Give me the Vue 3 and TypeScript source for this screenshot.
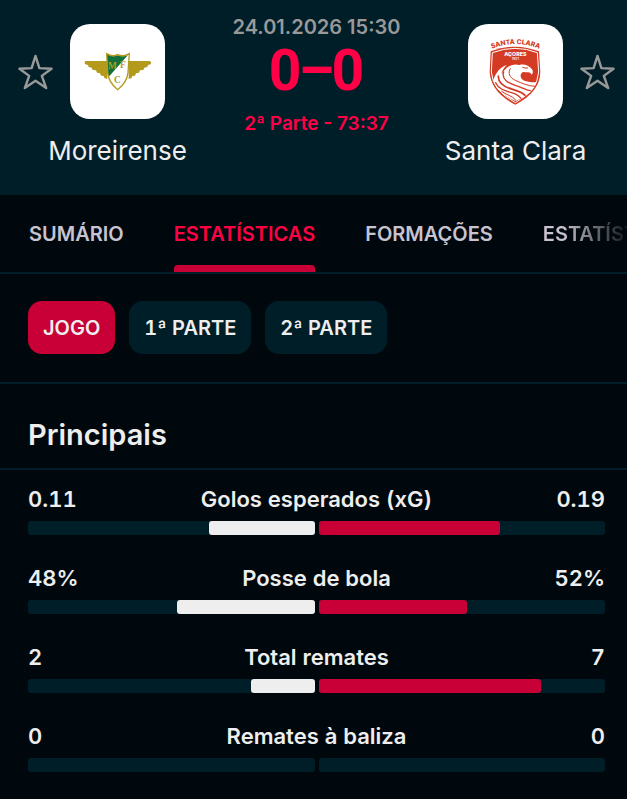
<script setup lang="ts">
import { ref } from 'vue'

interface Stat {
  label: string
  home: number
  away: number
  unit?: string
}

const tabs = ['Sumário', 'Estatísticas', 'Formações', 'Estatísticas']
const activeTab = ref(1)

const periods = ['Jogo', '1ª Parte', '2ª Parte']
const activePeriod = ref(0)

const stats: Stat[] = [
  { label: 'Golos esperados (xG)', home: 0.11, away: 0.19 },
  { label: 'Posse de bola', home: 48, away: 52, unit: '%' },
  { label: 'Total remates', home: 2, away: 7 },
  { label: 'Remates à baliza', home: 0, away: 0 },
]

function share(value: number, stat: Stat): string {
  const total = stat.home + stat.away
  return total ? `${(value / total) * 100}%` : '0'
}
</script>

<template>
  <main class="page">
    <header class="match">
      <div class="team home">
        <button class="star" type="button" aria-label="Favorito Moreirense">
          <svg viewBox="0 0 36 36"><path d="M18 1.500 22 14 34.500 14.600 24.500 22 29 34.500 18 27 7 34.500 11.500 22 1.500 14.600 14 14Z" /></svg>
        </button>
        <div class="crest">
          <svg viewBox="210 72 285 285">
            <path fill="#b39a1d" d="M257 183H322V237L313 234 311 228 303 227 300 220 291 218 288 211 278 210 275 203 266 201 264 195 256 193Q251 187 257 183Z" />
            <path fill="#b39a1d" d="M450 183H386V237L395 234 397 228 405 227 408 220 417 218 420 211 430 210 433 203 442 201 444 195 452 193Q456 187 450 183Z" />
            <path fill="#fff" d="M320 161Q337 172 353 164Q371 172 388 161L384 218Q381 248 353 269Q326 248 323 218Z" />
            <path fill="#12713b" d="M321 163Q337 172 353 166Q370 172 384 165L325 232 322 210Z" />
            <path fill="none" stroke="#b39a1d" stroke-width="4" d="M320 161Q337 172 353 164Q371 172 388 161L384 218Q381 248 353 269Q326 248 323 218Z" />
            <g class="monogram">
              <text x="324" y="207">M</text>
              <text x="360" y="203">F</text>
              <text x="342" y="250">C</text>
            </g>
          </svg>
        </div>
        <h2 class="name">Moreirense</h2>
      </div>

      <div class="result">
        <time class="date" datetime="2026-01-24T15:30">24.01.2026 15:30</time>
        <div class="score"><span>0</span><span class="dash">–</span><span>0</span></div>
        <div class="status">2ª Parte - 73:37</div>
      </div>

      <div class="team away">
        <div class="crest">
          <svg viewBox="-21 -18 285 285">
            <defs><path id="arch" d="M52 56Q121 28 192 56" /></defs>
            <text class="club"><textPath href="#arch" startOffset="50%">SANTA CLARA</textPath></text>
            <path fill="#d33b24" d="M47 64Q84 50 120 50Q157 50 192 64L196 126Q195 186 121 224Q47 186 44 126Z" />
            <path fill="none" stroke="#fff" stroke-width="3" d="M52 68Q86 55 120 55Q154 55 187 68L191 126Q188 181 121 218Q52 181 49 126Z" />
            <text class="place" x="121" y="78">AÇORES</text>
            <text class="year" x="121" y="90">1921</text>
            <path fill="#fff" d="M55 150C62 128 77 110 96 105C84 116 81 124 80 132C94 109 113 99 133 105C147 101 162 106 171 118C175 123 174 130 170 134C166 126 158 127 151 127C143 124 136 130 137 139C138 151 153 158 185 157C181 169 174 179 164 188C149 201 136 207 121 213C88 198 60 178 55 150Z" />
            <g fill="none" stroke="#d33b24" stroke-linecap="round">
              <path stroke-width="3" d="M106 116C98 128 103 143 121 151C141 160 159 168 179 169" />
              <path stroke-width="4" d="M86 126C78 148 102 160 121 166C139 172 153 180 166 182" />
              <path stroke-width="5" d="M70 138C69 162 91 172 113 178C130 183 143 188 150 196" />
              <path stroke-width="4" d="M62 158C72 181 98 184 119 191C128 195 134 199 138 205" />
              <path stroke-width="3" d="M80 184C93 195 111 196 122 210" />
              <path stroke-width="3" d="M143 112Q150 116 158 114" />
            </g>
          </svg>
        </div>
        <button class="star" type="button" aria-label="Favorito Santa Clara">
          <svg viewBox="0 0 36 36"><path d="M18 1.500 22 14 34.500 14.600 24.500 22 29 34.500 18 27 7 34.500 11.500 22 1.500 14.600 14 14Z" /></svg>
        </button>
        <h2 class="name">Santa Clara</h2>
      </div>
    </header>

    <nav class="tabs">
      <button
        v-for="(tab, i) in tabs"
        :key="i"
        type="button"
        class="tab"
        :class="{ active: i === activeTab }"
        @click="activeTab = i"
      >{{ tab }}</button>
    </nav>

    <div class="periods">
      <button
        v-for="(period, i) in periods"
        :key="period"
        type="button"
        class="period"
        :class="{ active: i === activePeriod }"
        @click="activePeriod = i"
      >{{ period }}</button>
    </div>

    <h3 class="title">Principais</h3>

    <section class="stats">
      <div v-for="stat in stats" :key="stat.label" class="stat">
        <div class="values">
          <span>{{ stat.home }}{{ stat.unit }}</span>
          <span>{{ stat.label }}</span>
          <span class="right">{{ stat.away }}{{ stat.unit }}</span>
        </div>
        <div class="bars">
          <div class="track left"><div class="fill white" :style="{ width: share(stat.home, stat) }"></div></div>
          <div class="track"><div class="fill red" :style="{ width: share(stat.away, stat) }"></div></div>
        </div>
      </div>
    </section>
  </main>
</template>

<style>
body {
  margin: 0;
  background: #00080d;
}
</style>

<style scoped>
.page {
  overflow: hidden;
  min-height: 100vh;
  background: #00080d;
  color: #eee;
  font-family: Inter, "Liberation Sans", sans-serif;
  font-size: 20px;
  font-weight: 600;
}
button {
  margin: 0;
  padding: 0;
  border: 0;
  background: none;
  color: inherit;
  font: inherit;
  cursor: pointer;
}
h2,
h3 {
  margin: 0;
}
.match {
  display: grid;
  grid-template-columns: auto 1fr auto;
  padding: 24px 12px 28px 18px;
  background: #001e28;
}
.team {
  display: grid;
  grid-template-columns: 35px 95px 35px;
  column-gap: 17px;
  row-gap: 16px;
  align-items: center;
}
.away .crest {
  grid-column: 2;
}
.star {
  height: 36px;
}
.star svg {
  display: block;
  width: 100%;
  height: 100%;
  fill: none;
  stroke: #999;
  stroke-width: 2.500;
  stroke-linejoin: round;
}
.crest {
  height: 95px;
  border-radius: 20px;
  background: #fff;
}
.crest svg {
  display: block;
  width: 100%;
  height: 100%;
}
.monogram {
  fill: #b39a1d;
  font-family: "Liberation Serif", serif;
  font-size: 28px;
  font-weight: 700;
}
.club {
  fill: #d33b24;
  font-size: 20px;
  font-weight: 800;
  text-anchor: middle;
}
.place {
  fill: #fff;
  font-size: 16px;
  font-weight: 800;
  text-anchor: middle;
}
.year {
  fill: #fff;
  font-size: 10px;
  text-anchor: middle;
}
.name {
  grid-column: 1 / -1;
  grid-row: 2;
  font-size: 26px;
  font-weight: 400;
  line-height: 32px;
  text-align: center;
}
.result {
  display: flex;
  flex-direction: column;
  align-items: center;
  margin-top: -9px;
  line-height: 24px;
  white-space: nowrap;
}
.date {
  color: #999;
}
.score {
  display: flex;
  margin: 2px 0 11px;
  color: #ff0046;
  font-family: Roboto, "Liberation Sans", sans-serif;
  font-size: 57px;
  font-weight: 700;
  line-height: 60px;
}
.dash {
  margin: 0 -3px;
}
.status {
  color: #ff0046;
  font-size: 19px;
}
.tabs {
  display: flex;
  gap: 50px;
  padding-left: 29px;
  border-bottom: 2px solid #001e28;
  overflow: hidden;
}
.tab {
  flex: none;
  position: relative;
  height: 77px;
  color: #c8c3d0;
  text-transform: uppercase;
}
.tab:last-child {
  background: linear-gradient(90deg, #c8c3d0 20px, transparent 90px);
  background-clip: text;
  color: transparent;
}
.tab.active {
  color: #ff0046;
}
.tab.active::after {
  content: "";
  position: absolute;
  right: 0;
  bottom: 0;
  left: 0;
  height: 7px;
  border-radius: 4px 4px 0 0;
  background: #c80037;
}
.periods {
  display: flex;
  gap: 14px;
  padding: 27px 28px 28px;
  border-bottom: 2px solid #001e28;
  font-variant-numeric: tabular-nums;
}
.period {
  height: 53px;
  padding: 0 15px;
  border-radius: 14px;
  background: #001e28;
  font-variant-numeric: inherit;
  text-transform: uppercase;
}
.period.active {
  background: #c80037;
}
.title {
  padding: 34px 28px 16px;
  border-bottom: 2px solid #001e28;
  font-size: 29px;
  font-weight: 600;
  line-height: 34px;
}
.stats {
  display: grid;
  gap: 29px;
  padding: 15px 22px 26px 28px;
}
.values {
  display: grid;
  grid-template-columns: 1fr auto 1fr;
  margin-bottom: 8px;
  font-size: 22px;
  font-variant-numeric: tabular-nums;
  line-height: 28px;
}
.right {
  text-align: right;
}
.bars {
  display: grid;
  grid-template-columns: 1fr 1fr;
  gap: 4px;
}
.track {
  display: flex;
  height: 14px;
  border-radius: 3px;
  background: #001e28;
}
.track.left {
  justify-content: flex-end;
}
.fill {
  border-radius: 3px;
}
.white {
  background: #eee;
}
.red {
  background: #c80037;
}
</style>
